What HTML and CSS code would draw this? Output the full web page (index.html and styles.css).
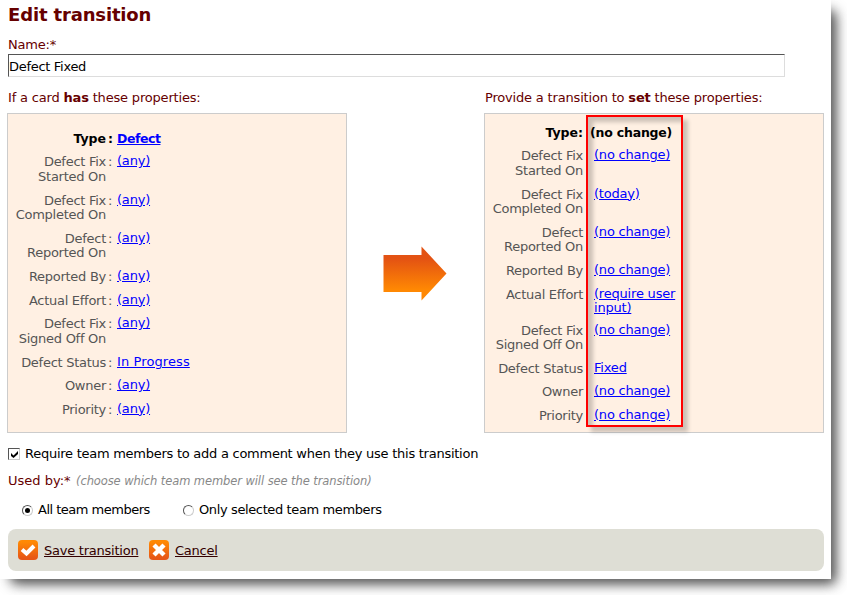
FILE: index.html
```html
<!DOCTYPE html>
<html lang="en">
<head>
<meta charset="utf-8">
<title>Edit transition</title>
<link rel="stylesheet" href="styles.css">
</head>
<body>
<main class="page">
  <h1>Edit transition</h1>
  <label class="name-label" for="name">Name:*</label>
  <input class="name" id="name" type="text" value="Defect Fixed">
  <div class="columns">
    <section class="column">
      <h2>If a card <b>has</b> these properties:</h2>
      <div class="panel from">
        <div class="row type"><span class="key">Type</span><span class="colon">:</span><a class="value">Defect</a></div>
        <div class="row tall"><span class="key">Defect Fix<br>Started On</span><span class="colon">:</span><a class="value">(any)</a></div>
        <div class="row tall"><span class="key">Defect Fix<br>Completed On</span><span class="colon">:</span><a class="value">(any)</a></div>
        <div class="row tall"><span class="key">Defect<br>Reported On</span><span class="colon">:</span><a class="value">(any)</a></div>
        <div class="row"><span class="key">Reported By</span><span class="colon">:</span><a class="value">(any)</a></div>
        <div class="row"><span class="key">Actual Effort</span><span class="colon">:</span><a class="value">(any)</a></div>
        <div class="row tall"><span class="key">Defect Fix<br>Signed Off On</span><span class="colon">:</span><a class="value">(any)</a></div>
        <div class="row"><span class="key">Defect Status</span><span class="colon">:</span><a class="value status">In Progress</a></div>
        <div class="row"><span class="key">Owner</span><span class="colon">:</span><a class="value">(any)</a></div>
        <div class="row"><span class="key">Priority</span><span class="colon">:</span><a class="value">(any)</a></div>
      </div>
    </section>
    <svg class="arrow" viewBox="0 0 64 55" width="64" height="55">
      <defs><linearGradient id="fire" x1="0" y1="0" x2="0" y2="1"><stop offset=".22" stop-color="#e35213"/><stop offset=".8" stop-color="#ff8803"/></linearGradient></defs>
      <path d="M0.5 9H38.500V0.500L63.500 27.500 38.500 54.500V46H0.500Z" fill="url(#fire)"/>
    </svg>
    <section class="column">
      <h2>Provide a transition to <b>set</b> these properties:</h2>
      <div class="panel to">
        <div class="row type"><span class="key">Type:</span><span class="value">(no change)</span></div>
        <div class="row tall"><span class="key">Defect Fix<br>Started On</span><a class="value">(no change)</a></div>
        <div class="row tall"><span class="key">Defect Fix<br>Completed On</span><a class="value">(today)</a></div>
        <div class="row tall"><span class="key">Defect<br>Reported On</span><a class="value">(no change)</a></div>
        <div class="row"><span class="key">Reported By</span><a class="value">(no change)</a></div>
        <div class="row wrapped"><span class="key">Actual Effort</span><a class="value">(require user<br>input)</a></div>
        <div class="row tall"><span class="key">Defect Fix<br>Signed Off On</span><a class="value">(no change)</a></div>
        <div class="row"><span class="key">Defect Status</span><a class="value">Fixed</a></div>
        <div class="row"><span class="key">Owner</span><a class="value">(no change)</a></div>
        <div class="row"><span class="key">Priority</span><a class="value">(no change)</a></div>
        <div class="highlight"></div>
      </div>
    </section>
  </div>
  <label class="require"><span class="checkbox"><svg viewBox="0 0 7 7" width="7" height="7"><path d="M0 2L2.500 4.500 7 0V3L2.500 7 0 5Z"/></svg></span><span class="require-text">Require team members to add a comment when they use this transition</span></label>
  <div class="used"><span class="used-label">Used by:*</span><i>(choose which team member will see the transition)</i></div>
  <div class="choices">
    <label class="choice all"><span class="radio on"></span><span>All team members</span></label>
    <label class="choice"><span class="radio"></span><span class="only">Only selected team members</span></label>
  </div>
  <div class="actions">
    <a class="action save"><svg viewBox="0 0 20 20" width="20" height="20"><defs><linearGradient id="btn" x1="0" y1="0" x2="0" y2="1"><stop offset=".1" stop-color="#ff8904"/><stop offset=".9" stop-color="#e75716"/></linearGradient></defs><rect width="20" height="20" rx="4" fill="url(#btn)"/><path d="M4 9.500L8.500 13.500 16 6" fill="none" stroke="#fff" stroke-width="4"/></svg><span>Save transition</span></a>
    <a class="action"><svg viewBox="0 0 20 20" width="20" height="20"><rect width="20" height="20" rx="4" fill="url(#btn)"/><path d="M5 5L15 15M15 5L5 15" fill="none" stroke="#fff" stroke-width="4.400"/></svg><span>Cancel</span></a>
  </div>
</main>
</body>
</html>
```
FILE: styles.css
```css
* { box-sizing: border-box; }
body { margin: 0; width: 847px; height: 595px; overflow: hidden; background: #fff; font: 13px/16px "DejaVu Sans", Verdana, sans-serif; color: #000; }
.page { width: 831px; height: 579px; padding: 4px 7px 0 8px; background: #fff; box-shadow: 7px 7px 12px -4px #555, 9px 9px 12px -5px #999; white-space: nowrap; }
h1 { margin: 0; font-size: 18px; line-height: 22px; letter-spacing: -.15px; color: #600; }
.name-label { display: block; margin-top: 11px; height: 16px; letter-spacing: -.2px; color: #600; }
.name { display: block; width: 777px; height: 23px; margin: 1px 0 0; padding: 2px 0 0; border: 1px solid; border-color: #555 #ddd #ddd #555; font: 13px "DejaVu Sans", Verdana, sans-serif; letter-spacing: -.3px; }
.columns { display: flex; margin: 13px 0 0 -1px; }
.column { width: 340px; }
h2 { margin: 0 0 8px 1px; font-size: 13px; line-height: 15px; font-weight: 400; letter-spacing: -.18px; color: #600; }
.arrow { margin: 156px 37px 0 36px; flex: none; }
.panel { position: relative; width: 340px; height: 320px; border: 1px solid #ccc; background: #fff0e3; line-height: 14.600px; letter-spacing: -.2px; }
.from { padding-top: 18px; }
.to { padding-top: 12px; }
.row { display: flex; height: 23.600px; }
.tall { height: 38.300px; }
.wrapped { height: 35.800px; }
.row.type { height: 22.300px; font-size: 12.500px; font-weight: 700; letter-spacing: -.2px; }
.from .type .value { letter-spacing: -.45px; }
.key { width: 98px; padding-top: 1px; text-align: right; letter-spacing: -.27px; color: #555; }
.type .key { color: #000; padding: 0; letter-spacing: 0; }
.colon { width: 11px; padding: 1px 0 0 2px; color: #555; }
.type .colon { color: #000; padding-top: 0; }
a { text-decoration: underline; color: #00f; }
.status { letter-spacing: .1px; }
.to .value { margin-left: 11px; }
.to .type .value { margin-left: 7px; }
.highlight { position: absolute; left: 101px; top: 1px; width: 97px; height: 312px; border: 2px solid #f00; box-shadow: 5px 5px 4px rgba(0,0,0,.2), inset 5px 5px 4px rgba(0,0,0,.2); }
.require { display: flex; align-items: center; height: 16px; margin-top: 13px; letter-spacing: -.26px; }
.checkbox { display: grid; place-items: center; flex: none; width: 12px; height: 12px; border: 1px solid; border-color: #555 #ccc #ccc #555; margin-right: 5px; }
.used { margin-top: 11px; display: flex; }
.used-label { color: #600; width: 68px; }
.used i { font-size: 11.500px; letter-spacing: -.09px; color: #888; }
.choices { display: flex; margin: 13px 0 0 14px; }
.choice { display: flex; align-items: center; width: 161px; letter-spacing: -.38px; }
.all { letter-spacing: -.5px; }
.radio { flex: none; width: 11px; height: 11px; border: 1px solid; border-color: #555 #ccc #ccc #555; border-radius: 50%; margin-right: 5px; display: grid; place-items: center; }
.on::after { content: ""; width: 5px; height: 5px; border-radius: 50%; background: #000; }
.actions { display: flex; align-items: center; width: 816px; height: 42px; margin-top: 11px; padding-left: 10px; border-radius: 8px; background: #deded5; }
.action { display: flex; align-items: center; gap: 6px; color: #300; width: 131px; letter-spacing: -.24px; text-decoration: none; }
.action span { text-decoration: underline; padding-top: 2px; }
```
